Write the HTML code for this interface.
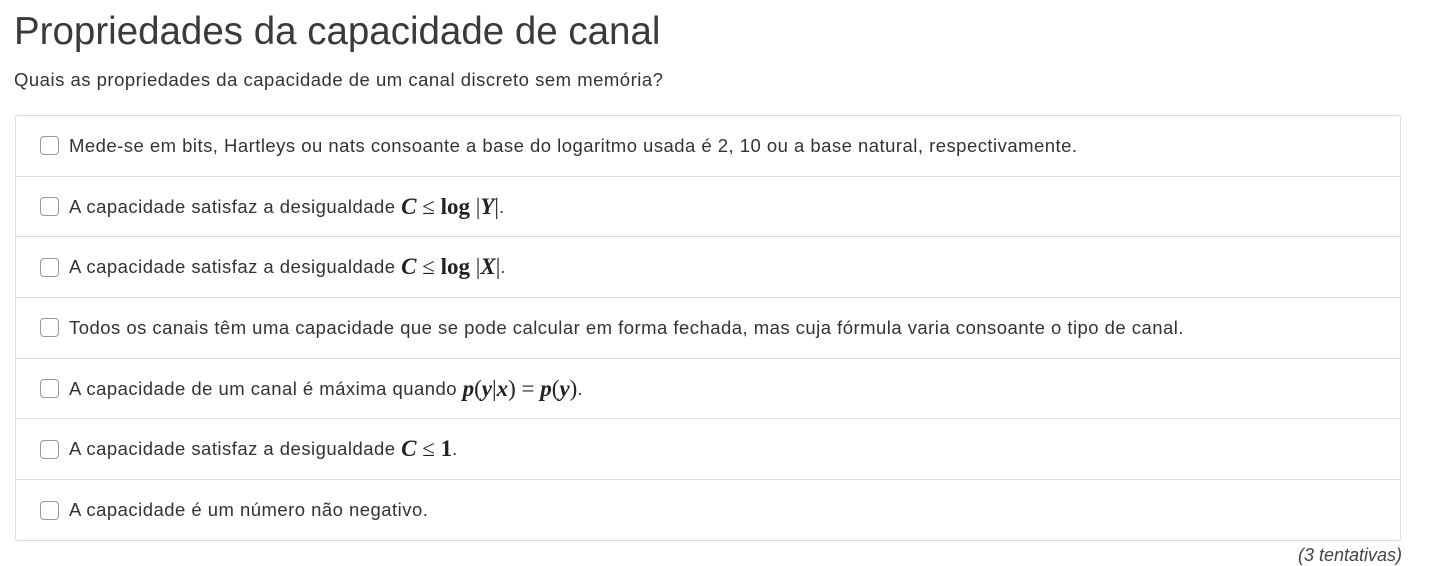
<!DOCTYPE html>
<html><head><meta charset="utf-8"><style>
body{margin:0;background:#fff;font-family:"Liberation Sans",sans-serif;color:#333;width:1432px;height:556px;overflow:hidden;position:relative}
h1{position:absolute;left:14px;top:10px;margin:0;font-weight:normal;font-size:38.5px;color:#3a3a3a;letter-spacing:0}
.q{position:absolute;left:14px;top:69px;font-size:18.5px;letter-spacing:0.5px;color:#333}
.box{position:absolute;left:15px;top:115px;width:1386px;height:426px;border:1px solid #ddd;border-radius:3px;box-sizing:border-box}
.row{height:60.7px;border-bottom:1px solid #ddd;box-sizing:border-box;display:flex;align-items:center;font-size:18.5px;letter-spacing:0.47px;color:#333}
.row:last-child{border-bottom:none}
.cb{width:19px;height:19px;border:1px solid #999;border-radius:4px;margin-left:24px;margin-right:10px;box-sizing:border-box;flex:none}
.m{font-family:"Liberation Serif",serif;font-size:23px;color:#222;letter-spacing:0}
.mi{font-style:italic;font-weight:bold}
.mb{font-weight:bold}
.t{position:absolute;right:30px;top:545px;font-style:italic;font-size:18px;color:#444}
</style></head><body>
<h1>Propriedades da capacidade de canal</h1>
<div class="q">Quais as propriedades da capacidade de um canal discreto sem memória?</div>
<div class="box">
<div class="row"><span class="cb"></span>Mede-se em bits, Hartleys ou nats consoante a base do logaritmo usada é 2, 10 ou a base natural, respectivamente.</div>
<div class="row"><span class="cb"></span>A capacidade satisfaz a desigualdade&nbsp;<span class="m"><span class="mi">C</span> ≤ <span class="mb">log</span> |<span class="mi">Y</span>|</span>.</div>
<div class="row"><span class="cb"></span>A capacidade satisfaz a desigualdade&nbsp;<span class="m"><span class="mi">C</span> ≤ <span class="mb">log</span> |<span class="mi">X</span>|</span>.</div>
<div class="row"><span class="cb"></span>Todos os canais têm uma capacidade que se pode calcular em forma fechada, mas cuja fórmula varia consoante o tipo de canal.</div>
<div class="row"><span class="cb"></span>A capacidade de um canal é máxima quando&nbsp;<span class="m"><span class="mi">p</span>(<span class="mi">y</span>|<span class="mi">x</span>) = <span class="mi">p</span>(<span class="mi">y</span>)</span>.</div>
<div class="row"><span class="cb"></span>A capacidade satisfaz a desigualdade&nbsp;<span class="m"><span class="mi">C</span> ≤ <span class="mb">1</span></span>.</div>
<div class="row"><span class="cb"></span>A capacidade é um número não negativo.</div>
</div>
<div class="t">(3 tentativas)</div>
</body></html>
